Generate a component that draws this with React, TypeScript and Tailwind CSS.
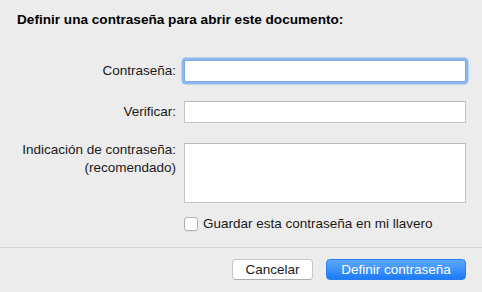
import React from "react";

export default function App() {
  return (
    <div
      className="w-[482px] h-[292px] bg-[#ececec] flex flex-col text-[13.5px] text-[#1a1a1a] overflow-hidden"
      style={{ fontFamily: '"Liberation Sans", Arial, sans-serif' }}
    >
      <div className="pt-[12px] pl-[17px] leading-[16px] font-bold text-black text-[13.6px]">
        Definir una contraseña para abrir este documento:
      </div>

      <div className="mt-[32px] grid grid-cols-[176px_282px] gap-x-[8px]">
        <div className="text-right h-[22px] leading-[22px]">Contraseña:</div>
        <div className="h-[22px] bg-white border border-[#7fa9e2] rounded-[2px] shadow-[0_0_0_2.5px_#8db8ef]" />

        <div className="mt-[19px] text-right h-[22px] leading-[22px]">Verificar:</div>
        <div className="mt-[19px] h-[22px] bg-white border border-[#c4c4c4] border-t-[#b9b9b9]" />

        <div className="mt-[20px] text-right leading-[18px] -translate-y-[2px]">
          <div>Indicación de contraseña:</div>
          <div>(recomendado)</div>
        </div>
        <div className="mt-[20px] h-[60px] bg-white border border-[#c4c4c4] border-t-[#b9b9b9]" />

        <div />
        <div className="mt-[13px] flex items-center h-[16px] gap-[5px]">
          <div className="w-[14px] h-[14px] bg-white border border-[#b2b2b2] rounded-[3px] shadow-[0_0.5px_0.5px_rgba(0,0,0,0.08)]" />
          <span className="leading-[16px]">Guardar esta contraseña en mi llavero</span>
        </div>
      </div>

      <div className="mt-[15px] h-px bg-[#d4d4d4]" />

      <div className="mt-[11px] flex justify-end gap-[13px] pr-[16px]">
        <button className="w-[81px] h-[21px] bg-white border border-[#c6c6c6] border-b-[#acacac] rounded-[4px] text-[13.5px] leading-[19px] text-[#1a1a1a]">
          Cancelar
        </button>
        <button className="w-[140px] h-[21px] rounded-[4px] border border-[#2a7cf2] bg-gradient-to-b from-[#5ba7fb] to-[#1a7bf7] text-white text-[13.5px] leading-[19px]">
          Definir contraseña
        </button>
      </div>
    </div>
  );
}
